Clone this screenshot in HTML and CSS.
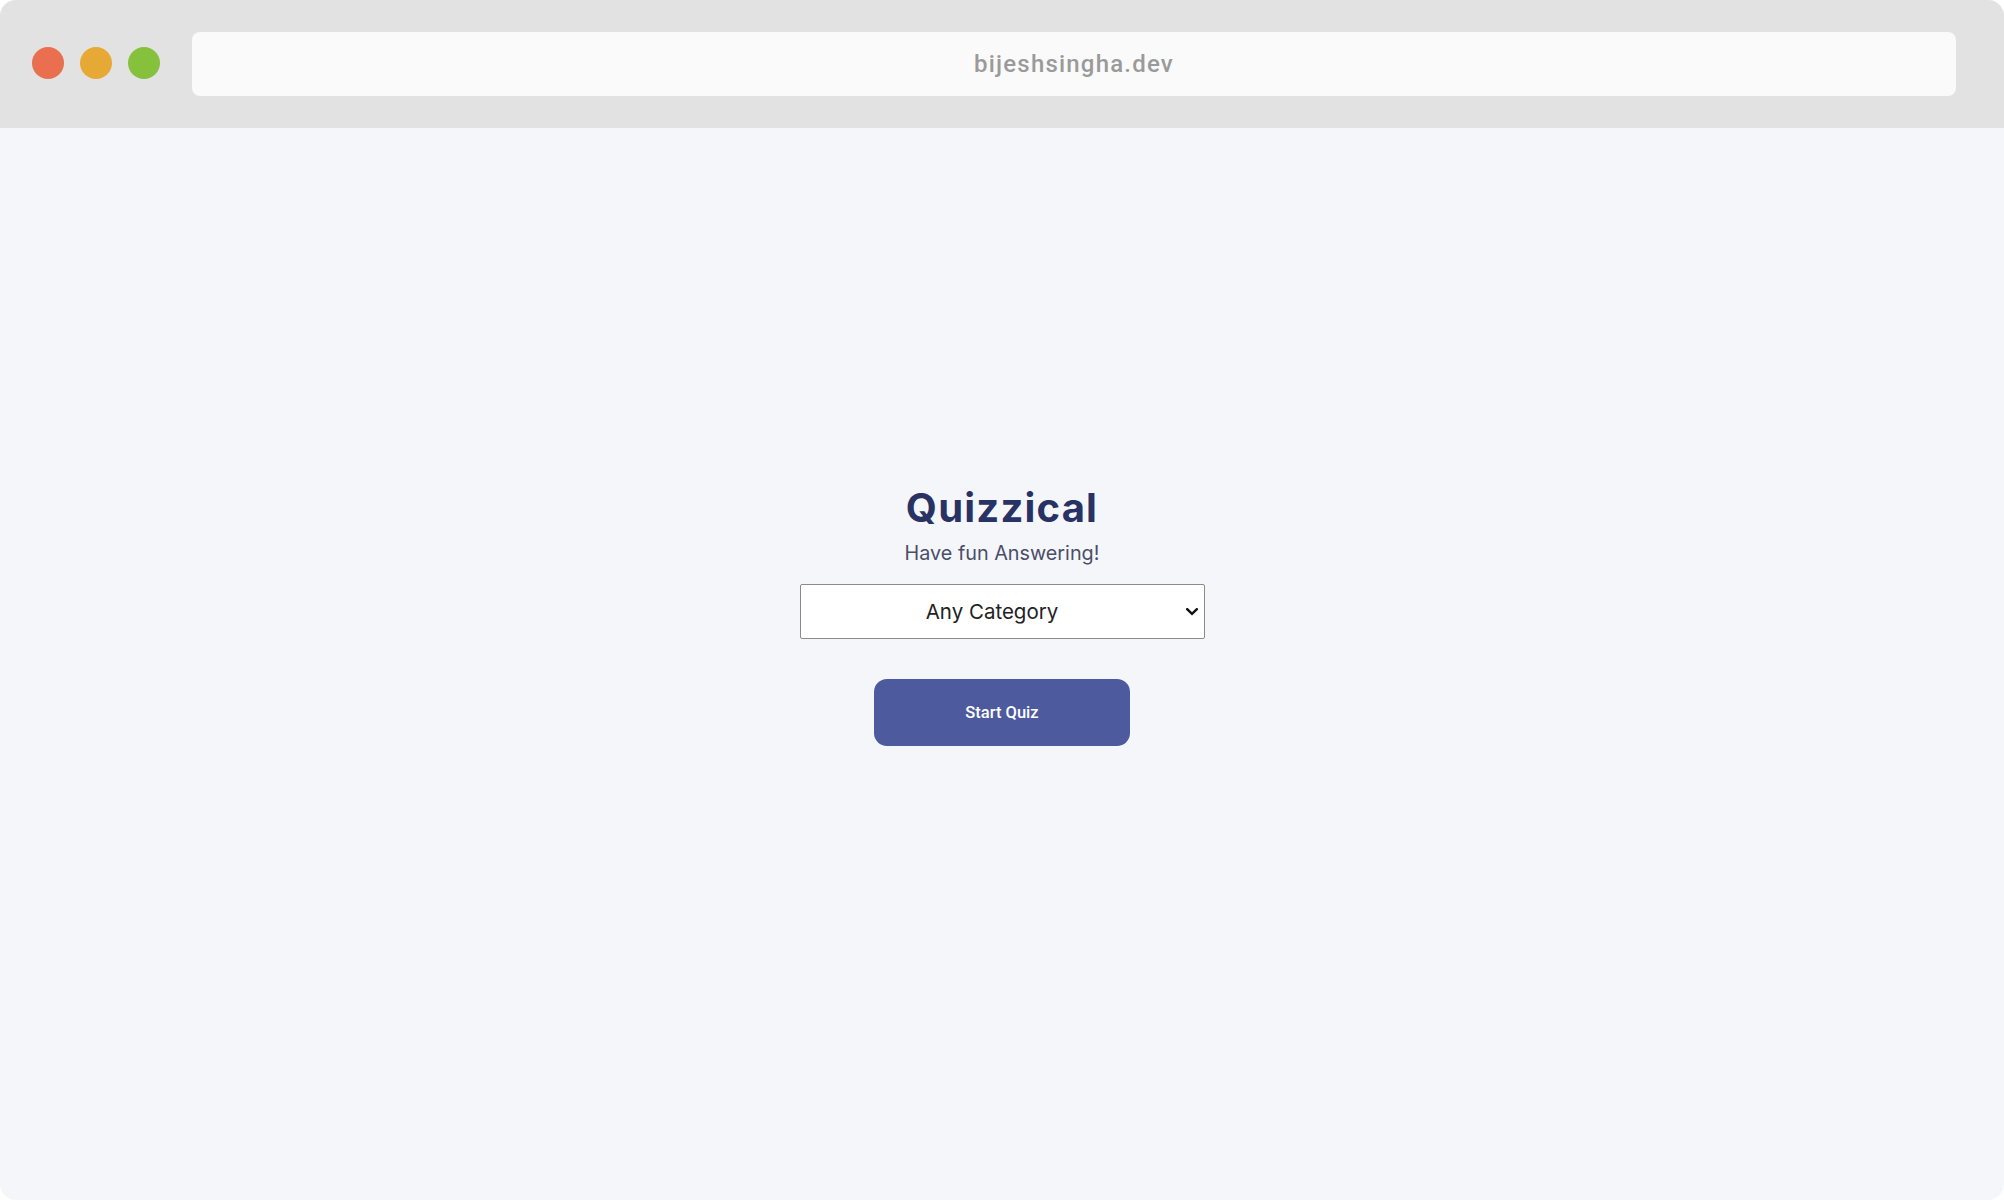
FILE: index.html
```html
<!DOCTYPE html>
<html lang="en">
<head>
<meta charset="utf-8">
<title>Quizzical</title>
<link rel="stylesheet" href="styles.css">
</head>
<body>
<div class="window">
  <header class="chrome">
    <div class="lights">
      <span class="light red"></span>
      <span class="light yellow"></span>
      <span class="light green"></span>
    </div>
    <div class="url">bijeshsingha.dev</div>
  </header>
  <main class="page">
    <h1 class="title">Quizzical</h1>
    <p class="subtitle">Have fun Answering!</p>
    <div class="select-wrap">
      <select class="category">
        <option>Any Category</option>
      </select>
      <svg class="chevron" width="12" height="8" viewBox="0 0 12 8" aria-hidden="true">
        <path d="M1.2 1.2 L6 5.8 L10.8 1.2" fill="none" stroke="#111" stroke-width="2.4" stroke-linecap="square"/>
      </svg>
    </div>
    <button class="start">Start Quiz</button>
  </main>
</div>
</body>
</html>
```

FILE: styles.css
```css
html, body {
  margin: 0;
  padding: 0;
  background: #ffffff;
}
.window {
  width: 2004px;
  height: 1200px;
  border-radius: 16px;
  overflow: hidden;
  display: flex;
  flex-direction: column;
  background: #f5f6fa;
}
.chrome {
  height: 128px;
  background: #e2e2e2;
  display: flex;
  align-items: center;
  padding: 0 48px 0 32px;
  box-sizing: border-box;
  gap: 32px;
}
.lights {
  display: flex;
  gap: 16px;
  margin-top: -2px;
}
.light {
  width: 32px;
  height: 32px;
  border-radius: 50%;
  display: block;
}
.red { background: #e96f4f; }
.yellow { background: #e7a936; }
.green { background: #86c13d; }
.url {
  flex: 1;
  height: 64px;
  margin-top: -1px;
  background: #fafafa;
  border-radius: 8px;
  display: flex;
  align-items: center;
  justify-content: center;
  font-family: Roboto, "Liberation Sans", sans-serif;
  font-weight: 500;
  font-size: 24px;
  letter-spacing: 1.2px;
  color: #9a9a9a;
}
.page {
  flex: 1;
  display: flex;
  flex-direction: column;
  align-items: center;
  padding-top: 356px;
  font-family: Inter, "Liberation Sans", sans-serif;
}
.title {
  margin: 0;
  font-size: 40px;
  line-height: 48px;
  font-weight: 700;
  letter-spacing: 1.2px;
  color: #293264;
}
.subtitle {
  margin: 9px 0 0;
  font-size: 19.8px;
  line-height: 24px;
  color: #4a4e69;
}
.select-wrap {
  position: relative;
  margin-top: 19px;
  width: 405px;
  height: 55px;
}
.category {
  appearance: none;
  -webkit-appearance: none;
  width: 100%;
  height: 100%;
  border: 1px solid #8a8a8a;
  border-radius: 2px;
  background: #ffffff;
  font-family: Inter, "Liberation Sans", sans-serif;
  font-size: 20.5px;
  color: #222222;
  text-align: center;
  text-align-last: center;
  padding: 0 24px 0 4px;
}
.chevron {
  position: absolute;
  right: 7px;
  top: 24px;
  pointer-events: none;
}
.start {
  margin-top: 40px;
  width: 256px;
  height: 67px;
  border: none;
  border-radius: 13px;
  background: #4d5b9e;
  color: #ffffff;
  font-family: Roboto, "Liberation Sans", sans-serif;
  font-weight: 500;
  font-size: 16.5px;
}
```
